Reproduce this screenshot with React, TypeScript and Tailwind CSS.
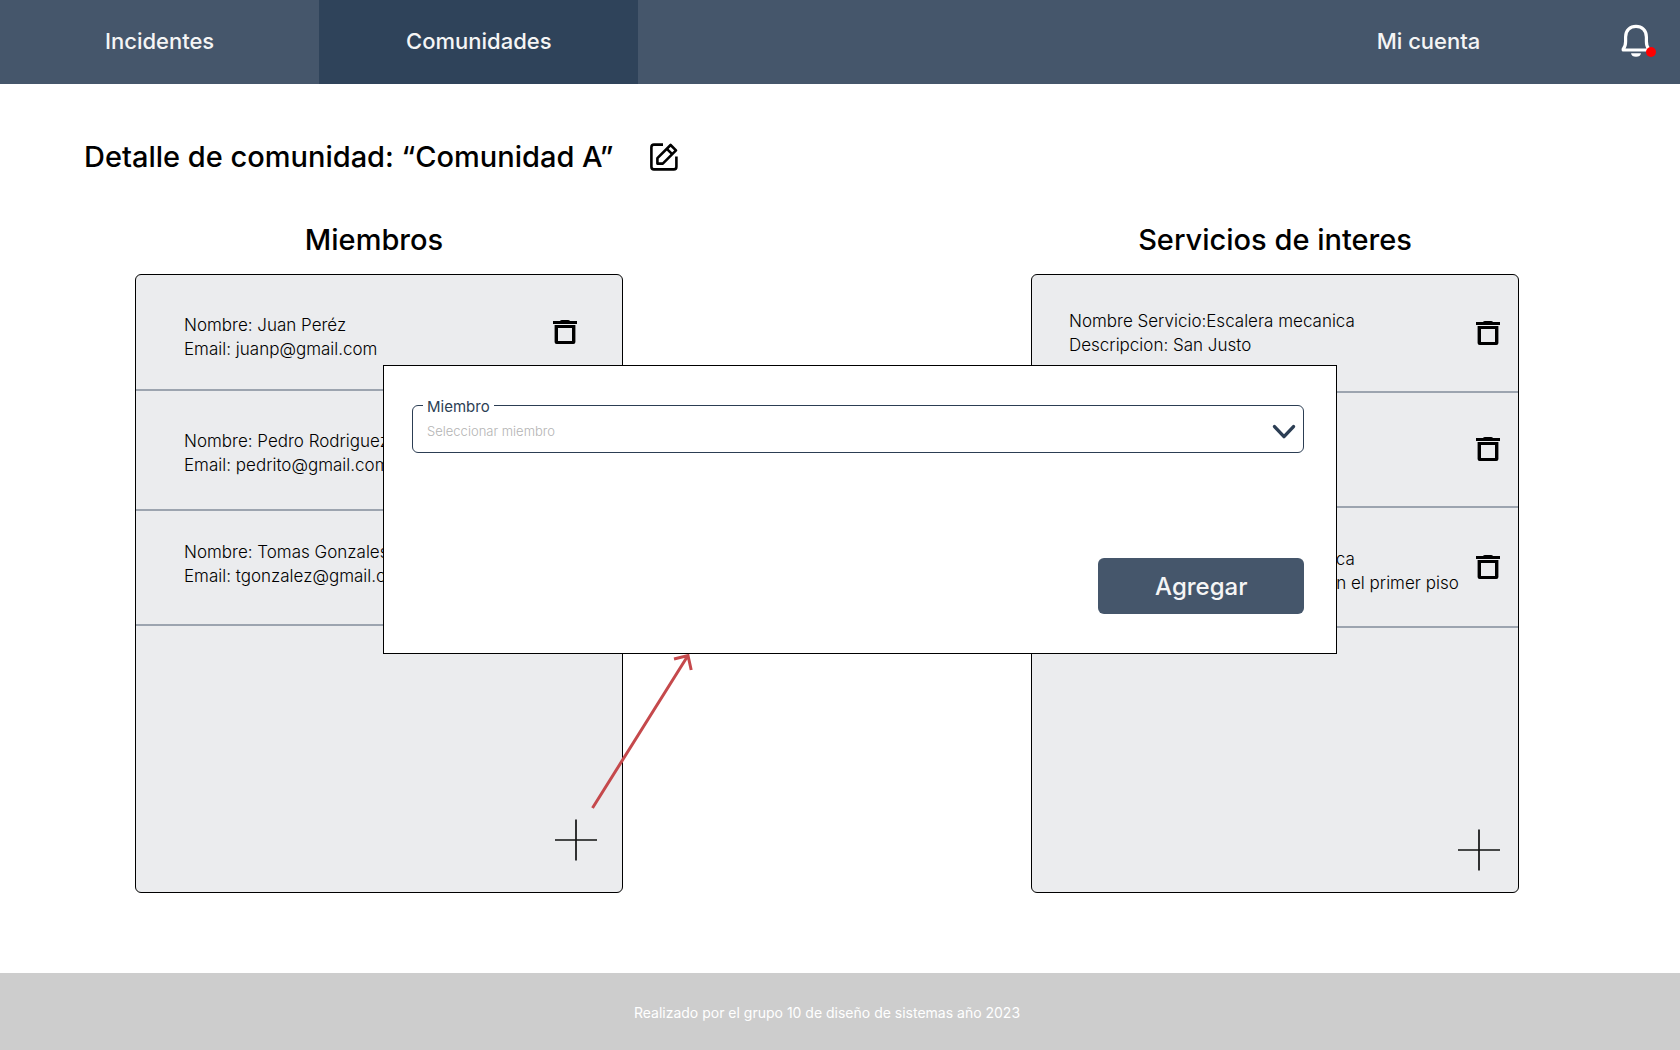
type Entry = {
  lines: [string, string];
  row: string;
  text: string;
};

const members: Entry[] = [
  { lines: ["Nombre: Juan Peréz", "Email: juanp@gmail.com"], row: "min-h-[116px]", text: "pt-2.5" },
  { lines: ["Nombre: Pedro Rodriguez", "Email: pedrito@gmail.com"], row: "min-h-[120px]", text: "pt-1.5" },
  { lines: ["Nombre: Tomas Gonzales", "Email: tgonzalez@gmail.com"], row: "min-h-[115px]", text: "pb-2" },
];

const services: Entry[] = [
  { lines: ["Nombre Servicio:Escalera mecanica", "Descripcion: San Justo"], row: "min-h-[118px]", text: "" },
  { lines: ["Nombre Servicio:Ascensor", "Descripcion: San Justo"], row: "min-h-[115px]", text: "" },
  { lines: ["Nombre Servicio:Escalera mecanica", "Descripcion: Escalera mecanica en el primer piso"], row: "min-h-[120px]", text: "pt-2" },
];

function TrashIcon() {
  return (
    <svg width="24" height="25" viewBox="0 0 24 25" aria-hidden="true">
      <path d="M7 1 Q7.5 0 9 0 H15 Q16.5 0 17 1 H24 V4 H0 V1 Z" fill="#000" />
      <path
        d="M1.6 5 H22.4 V22 Q22.4 24 20.4 24 H3.6 Q1.6 24 1.6 22 Z M5 8 V21 H19 V8 Z"
        fill="#000"
        fillRule="evenodd"
      />
    </svg>
  );
}

function EditIcon() {
  return (
    <svg width="28" height="28" viewBox="0 0 28 28" fill="none" stroke="#000" strokeWidth="2.6" aria-hidden="true">
      <path d="M13 1.6 H4 Q1.4 1.6 1.4 4.2 V23.8 Q1.4 26.4 4 26.4 H23.8 Q26.4 26.4 26.4 23.8 V13.6" />
      <path d="M7.4 20.6 V15.2 L20.6 2 L26 7.4 L12.8 20.6 Z" strokeLinejoin="round" />
      <path d="M16.8 5.8 L22.2 11.2" />
    </svg>
  );
}

function BellIcon() {
  return (
    <svg width="30" height="34" viewBox="0 0 30 34" aria-hidden="true">
      <path
        d="M2.2 26 H27.8 V25 Q25.4 22.4 25.4 17.4 V13 C25.4 6.4 20.8 2.4 15 2.4 S4.6 6.4 4.6 13 V17.4 Q4.6 22.4 2.2 25 Z"
        fill="none"
        stroke="#fff"
        strokeWidth="3.2"
        strokeLinejoin="round"
      />
      <path d="M10 29.2 H20 Q19.4 32.8 15 32.8 T10 29.2 Z" fill="#fff" />
    </svg>
  );
}

function PlusIcon() {
  return (
    <svg width="42" height="42" viewBox="0 0 42 42" stroke="#111" strokeWidth="1.7" aria-hidden="true">
      <path d="M0 21 H42 M21 0.5 V41.5" />
    </svg>
  );
}

type PanelProps = {
  title: string;
  titlePadding: string;
  entries: Entry[];
  rowPadding: string;
  addPadding: string;
  addLabel: string;
};

function Panel({ title, titlePadding, entries, rowPadding, addPadding, addLabel }: PanelProps) {
  return (
    <section className="flex flex-col">
      <h2 className={`mb-[14px] text-center text-[29px] leading-10 font-medium ${titlePadding}`}>{title}</h2>
      <div className="flex min-h-[619px] flex-col rounded-md border border-black bg-[#ebecee]">
        <ul>
          {entries.map((entry, i) => (
            <li
              key={i}
              className={`flex items-center justify-between border-b-2 border-[#9ca4af] ${entry.row} ${rowPadding}`}
            >
              <div className={`text-[17px] leading-6 font-light whitespace-nowrap ${entry.text}`}>
                <p>{entry.lines[0]}</p>
                <p>{entry.lines[1]}</p>
              </div>
              <button type="button" aria-label="Eliminar">
                <TrashIcon />
              </button>
            </li>
          ))}
        </ul>
        <div className={`mt-auto flex justify-end ${addPadding}`}>
          <button type="button" aria-label={addLabel}>
            <PlusIcon />
          </button>
        </div>
      </div>
    </section>
  );
}

function AddMemberDialog() {
  return (
    <div
      role="dialog"
      aria-label="Agregar miembro"
      className="absolute top-[281px] left-[22.8%] flex w-[56.8%] flex-col border border-black bg-white pt-[39px] pr-8 pb-[39px] pl-7"
    >
      <div className="relative">
        <label htmlFor="miembro" className="absolute -top-2 left-[11px] bg-white px-1 text-[15px] leading-5 text-[#2c3e54]">
          Miembro
        </label>
        <select
          id="miembro"
          defaultValue=""
          className="block h-12 w-full appearance-none rounded-md border border-[#2c3e54] bg-white pt-1.5 pr-10 pl-[14px] text-[13px] font-light text-[#b4b4b4]"
        >
          <option value="">Seleccionar miembro</option>
        </select>
        <svg
          width="24"
          height="16"
          viewBox="0 0 24 16"
          className="pointer-events-none absolute top-[19px] right-2"
          fill="none"
          stroke="#2c3e54"
          strokeWidth="3.4"
          strokeLinecap="round"
          strokeLinejoin="round"
          aria-hidden="true"
        >
          <path d="M2.5 2.6 L12 12.6 L21.5 2.6" />
        </svg>
      </div>
      <button
        type="button"
        className="mt-[105px] h-14 w-[206px] self-end rounded-md bg-[#45566b] pt-0.5 text-2xl font-medium text-[#f5f5f5]"
      >
        Agregar
      </button>
      <svg
        width="106"
        height="158"
        viewBox="0 0 106 158"
        className="pointer-events-none absolute top-full left-[206px]"
        fill="none"
        stroke="#c5494c"
        strokeWidth="3"
        aria-hidden="true"
      >
        <path d="M2.5 155 L98 2.5 M84 6 L98 2.5 L101.2 17" />
      </svg>
    </div>
  );
}

export default function App() {
  return (
    <div className="flex min-h-screen flex-col bg-white font-['Inter',sans-serif] text-black">
      <header className="flex h-[84px] items-stretch justify-between bg-[#45566b] text-[22px] font-medium text-[#f5f5f5]">
        <nav className="flex w-[38%]">
          <a href="#incidentes" className="flex flex-1 items-center justify-center pb-0.5">
            Incidentes
          </a>
          <a href="#comunidades" aria-current="page" className="flex flex-1 items-center justify-center bg-[#2f435a] pb-0.5">
            Comunidades
          </a>
        </nav>
        <div className="flex w-[25%] items-center pb-0.5">
          <a href="#cuenta" className="flex-1 pl-2 text-center">
            Mi cuenta
          </a>
          <button type="button" aria-label="Notificaciones" className="relative mr-[29px] ml-8">
            <BellIcon />
            <span className="absolute right-[-5px] bottom-[1px] size-[10px] rounded-full bg-[#ff0000]" />
          </button>
        </div>
      </header>

      <main className="relative flex-1 pb-20">
        <div className="flex items-center gap-[37px] pt-[53px] pl-[84px]">
          <h1 className="text-[29px] leading-10 font-medium">Detalle de comunidad: “Comunidad A”</h1>
          <button type="button" aria-label="Editar comunidad">
            <EditIcon />
          </button>
        </div>

        <div className="mt-[43px] grid grid-cols-[488fr_408fr_488fr] pr-[161px] pl-[135px]">
          <Panel
            title="Miembros"
            titlePadding="pr-[10px]"
            entries={members}
            rowPadding="pr-[45px] pl-12"
            addPadding="pr-[25px] pb-[31px]"
            addLabel="Agregar miembro"
          />
          <div />
          <Panel
            title="Servicios de interes"
            titlePadding="px-0"
            entries={services}
            rowPadding="pr-[18px] pl-[37px]"
            addPadding="pr-[18px] pb-[21px]"
            addLabel="Agregar servicio"
          />
        </div>

        <AddMemberDialog />
      </main>

      <footer className="flex h-[77px] items-center justify-center bg-[#cdcdcd] pt-0.5 pr-[26px] text-sm text-white">
        Realizado por el grupo 10 de diseño de sistemas año 2023
      </footer>
    </div>
  );
}
